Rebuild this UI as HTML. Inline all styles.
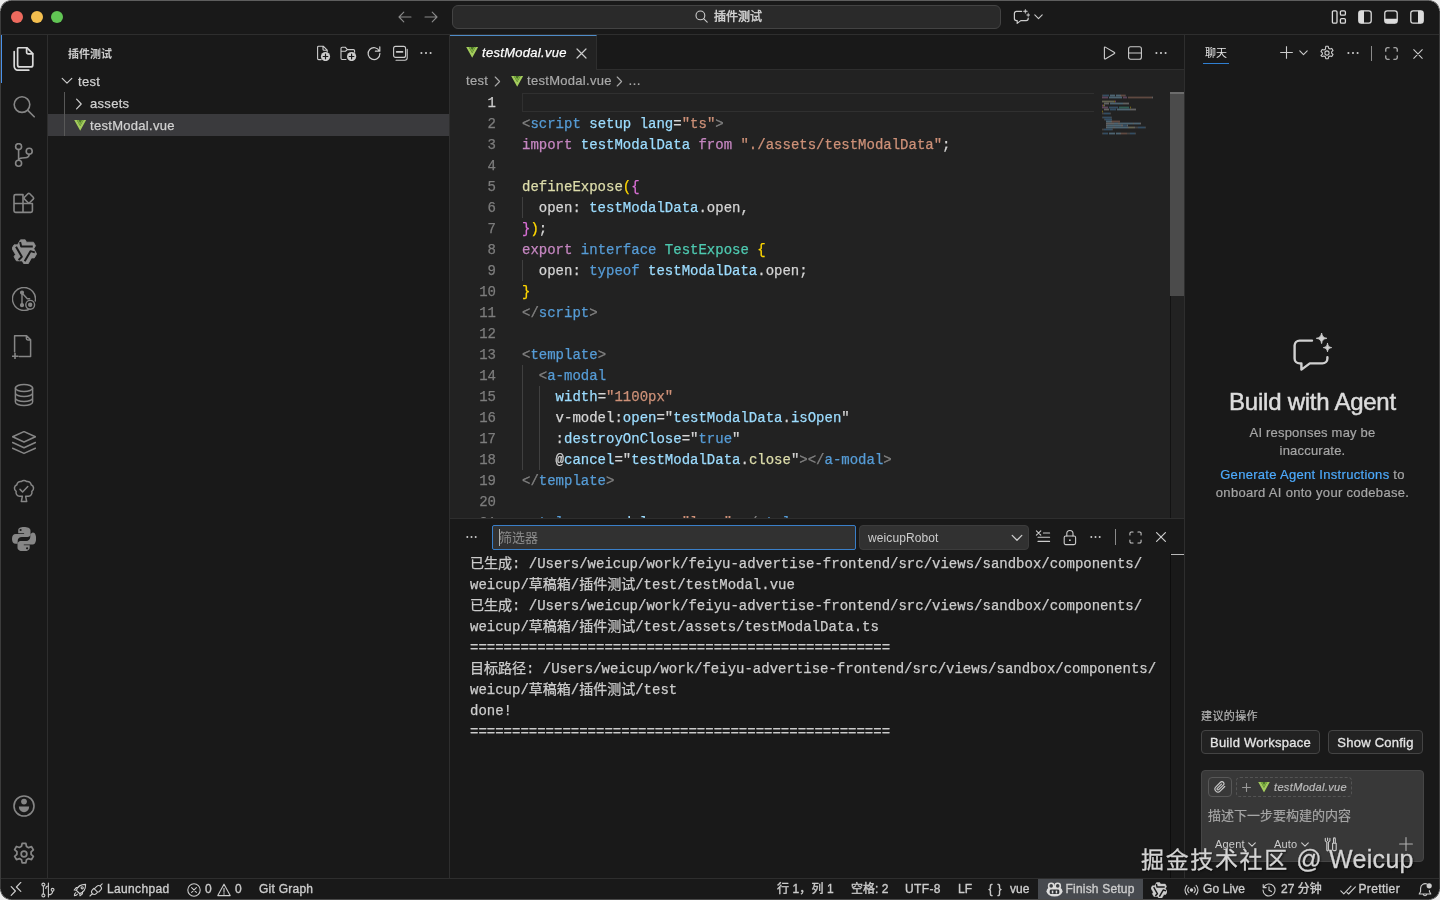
<!DOCTYPE html>
<html lang="zh-CN">
<head>
<meta charset="utf-8">
<title>testModal.vue — 插件测试</title>
<style>
*{box-sizing:border-box;margin:0;padding:0}
html,body{width:1440px;height:900px;overflow:hidden;background:#191919}
body{font-family:"Liberation Sans","Noto Sans CJK SC",sans-serif;font-size:13px;color:#cccccc;position:relative}
.abs{position:absolute}
#title,#act,#side,#ed,#pan,#chat,#stat,#wm{will-change:transform}
svg{display:block}
.ico{stroke:#cccccc;fill:none;stroke-linecap:round;stroke-linejoin:round}
.ico:not([stroke-width]){stroke-width:1.1}
/* window corners */
.corner{position:absolute;width:12px;height:12px;background:#8e8e8e;z-index:50}
.corner i{position:absolute;width:24px;height:24px;border-radius:12px;background:#191919}
.cn{position:absolute;width:11px;height:11px;z-index:60}
/* title bar */
#title{left:0;top:0;width:1440px;height:35px;border-bottom:1px solid #2e2e2e;background:#191919}
.tl{position:absolute;top:11px;width:12px;height:12px;border-radius:6px}
#cmd{left:452px;top:5px;width:549px;height:24px;border:1px solid #434343;border-radius:6px;background:#2a2a2a}
#cmd span{position:absolute;left:261px;top:3px;font-size:12px;color:#d4d4d4;line-height:16px;-webkit-text-stroke:.45px #d4d4d4}
/* activity bar */
#act{left:0;top:35px;width:48px;height:843px;border-right:1px solid #2e2e2e;background:#191919}
#act .sel{position:absolute;left:0;top:0;width:2px;height:48px;background:#4a92ea}
#act svg{position:absolute;left:12px}
/* sidebar */
#side{left:48px;top:35px;width:402px;height:843px;border-right:1px solid #2e2e2e;background:#191919}
#side .hd{position:absolute;left:20px;top:12px;font-size:11px;color:#cccccc;font-weight:bold;line-height:14px}
.row{position:absolute;left:0;width:401px;height:22px;line-height:24px;font-size:13px;color:#d0d0d0;letter-spacing:.3px;-webkit-text-stroke:.25px #d0d0d0}
.row.on{background:#3a3a3d}
/* editor */
#ed{left:450px;top:35px;width:734px;height:483px;background:#222222}
#tabs{left:0;top:0;width:735px;height:35px;background:#191919;border-bottom:1px solid #2e2e2e}
#tab{left:0;top:0;width:147px;height:35px;background:#222222;border-top:1px solid #4f8cc8;border-right:1px solid #2e2e2e}
#tab span{position:absolute;left:32px;top:9px;font-style:italic;font-size:13px;color:#ffffff;line-height:16px;letter-spacing:.3px;-webkit-text-stroke:.25px #ffffff}
#bc{left:0;top:35px;width:735px;height:22px;line-height:22px;font-size:13px;color:#a9a9a9;letter-spacing:.3px;-webkit-text-stroke:.2px #a9a9a9}
#code{left:0;top:57px;width:721px;height:426px;overflow:hidden;font-family:"Liberation Mono",monospace;font-size:14px;line-height:21px;white-space:pre;color:#d4d4d4;-webkit-text-stroke:.25px}
.ln{position:absolute;left:0;margin-top:1px;width:46px;text-align:right;color:#7d7d7d;height:21px}
.cl{position:absolute;left:72px;margin-top:1px;height:21px}
.k{color:#c586c0}.b{color:#569cd6}.v{color:#9cdcfe}.s{color:#ce9178}.g{color:#808080}.t{color:#4ec9b0}.y{color:#ffd700}.p{color:#da70d6}.f{color:#dcdcaa}.w{color:#d4d4d4}
.ig{position:absolute;width:1px;background:#404040}
/* panel */
#pan{left:450px;top:518px;width:734px;height:360px;background:#191919;border-top:1px solid #2e2e2e}
#out{left:20px;top:35px;font-family:"Liberation Mono","Noto Sans CJK SC",monospace;font-size:14px;line-height:21px;color:#cccccc;white-space:pre;-webkit-text-stroke:.25px #cccccc}
/* chat */
#chat{left:1184px;top:35px;width:256px;height:843px;background:#191919;border-left:1px solid #2e2e2e}
.btn{height:24px;padding-top:1px;border:1px solid #444444;border-radius:4px;background:#222222;text-align:center;font-size:13px;line-height:22px;color:#e4e4e4;letter-spacing:.25px;-webkit-text-stroke:.3px #e4e4e4;white-space:nowrap}
#wm{left:1141px;top:841px;white-space:nowrap;line-height:36px;color:#d4d4d4;-webkit-text-stroke:.3px #d4d4d4;text-shadow:1px 1px 2px rgba(0,0,0,.7);z-index:20}
/* status */
#stat{left:0;top:878px;width:1440px;height:22px;border-top:1px solid #2e2e2e;background:#191919;font-size:12px;color:#cccccc;line-height:21px}
#stat span{position:absolute;top:0;white-space:nowrap;-webkit-text-stroke:.35px #cccccc}
</style>
</head>
<body>
<div class="abs" style="left:0;top:0;width:1440px;height:1px;background:#5e5e5e;z-index:55"></div>
<div class="abs" style="left:0;top:899px;width:1440px;height:1px;background:#4a4a4a;z-index:55"></div>
<div class="abs" style="left:0;top:0;width:1px;height:900px;background:#3c3c3c;z-index:55"></div>
<div class="abs" style="left:1439px;top:0;width:1px;height:900px;background:#3c3c3c;z-index:55"></div>
<div class="cn" style="left:0;top:0;background:radial-gradient(circle at 100% 100%,rgba(0,0,0,0) 9.600px,#777 10.200px,#777 10.600px,#ececec 11.200px)"></div>
<div class="cn" style="left:1429px;top:0;background:radial-gradient(circle at 0 100%,rgba(0,0,0,0) 9.600px,#777 10.200px,#777 10.600px,#ececec 11.200px)"></div>
<div class="cn" style="left:0;top:889px;background:radial-gradient(circle at 100% 0,rgba(0,0,0,0) 9.600px,#666 10.200px,#666 10.600px,#ececec 11.200px)"></div>
<div class="cn" style="left:1429px;top:889px;background:radial-gradient(circle at 0 0,rgba(0,0,0,0) 9.600px,#666 10.200px,#666 10.600px,#ececec 11.200px)"></div>
<!-- TITLE -->
<div id="title" class="abs">
  <div class="tl" style="left:11px;background:#ed6a5e"></div>
  <div class="tl" style="left:31px;background:#f4bf4f"></div>
  <div class="tl" style="left:51px;background:#61c554"></div>
  <svg class="abs ico" style="left:398px;top:11px" width="14" height="12" viewBox="0 0 14 12"><path d="M13 6H1.200M5.800 1.200L1 6l4.800 4.800" style="stroke:#8a8a8a"/></svg>
  <svg class="abs ico" style="left:424px;top:11px" width="14" height="12" viewBox="0 0 14 12"><path d="M1 6h11.800M8.200 1.200L13 6l-4.800 4.800" style="stroke:#8a8a8a"/></svg>
  <div id="cmd" class="abs"><svg class="abs ico" style="left:242px;top:4px" width="13" height="13" viewBox="0 0 13 13"><circle cx="5.400" cy="5.400" r="4.400"/><path d="M8.600 8.600l3.600 3.600"/></svg><span>插件测试</span></div>
  <!-- chat icon -->
  <svg class="abs ico" style="left:1013px;top:9px" width="18" height="16" viewBox="0 0 18 16"><path d="M8.600 2.400H3.400a2 2 0 0 0-2 2v5.200a2 2 0 0 0 2 2h.8v2.800l3.600-2.800h5.400a2 2 0 0 0 2-2V9" stroke-width="1.200"/><path d="M12.400 0c.2 1.500.8 2.100 2.300 2.300-1.500.2-2.100.8-2.300 2.300-.2-1.500-.8-2.100-2.300-2.300 1.500-.2 2.100-.8 2.300-2.300zM15.200 4.200c.2 1.200.6 1.600 1.800 1.800-1.200.2-1.600.6-1.800 1.800-.2-1.200-.6-1.600-1.800-1.800 1.200-.2 1.600-.6 1.800-1.800z" fill="#cccccc" stroke-width=".4"/></svg>
  <svg class="abs ico" style="left:1034px;top:14px" width="9" height="6" viewBox="0 0 9 6"><path d="M.8.900l3.700 3.700L8.200.900"/></svg>
  <!-- layout controls -->
  <svg class="abs ico" style="left:1331px;top:10px;stroke:#dcdcdc" width="16" height="14" viewBox="0 0 16 14" stroke-width="1.3"><rect x="1.4" y=".8" width="4.6" height="12.4" rx="1.2"/><rect x="9.400" y=".8" width="5" height="4.4" rx="1.2"/><rect x="9.400" y="8.600" width="5" height="4.600" rx="1.2"/></svg>
  <svg class="abs ico" style="left:1358px;top:10px;stroke:#dcdcdc" width="14" height="14" viewBox="0 0 14 14" stroke-width="1.3"><rect x=".8" y=".8" width="12.4" height="12.4" rx="2.4"/><path d="M3.200 .8h2.800v12.400H3.200a2.400 2.400 0 0 1-2.400-2.400V3.200A2.400 2.400 0 0 1 3.200 .8z" fill="#dcdcdc" stroke="none"/></svg>
  <svg class="abs ico" style="left:1384px;top:10px;stroke:#dcdcdc" width="14" height="14" viewBox="0 0 14 14" stroke-width="1.3"><rect x=".8" y=".8" width="12.4" height="12.4" rx="2.4"/><path d="M.8 8.800h12.400v2a2.400 2.400 0 0 1-2.400 2.400H3.200a2.400 2.400 0 0 1-2.400-2.400z" fill="#dcdcdc" stroke="none"/></svg>
  <svg class="abs ico" style="left:1410px;top:10px;stroke:#dcdcdc" width="14" height="14" viewBox="0 0 14 14" stroke-width="1.3"><rect x=".8" y=".8" width="12.4" height="12.4" rx="2.4"/><path d="M8 .8h2.800a2.400 2.400 0 0 1 2.400 2.400v7.600a2.400 2.400 0 0 1-2.400 2.400H8z" fill="#dcdcdc" stroke="none"/></svg>
</div>
<!-- ACTIVITY -->
<div id="act" class="abs"><div class="sel"></div>
  <!-- files (active) -->
  <svg style="top:12px" width="24" height="24" viewBox="0 0 24 24" class="ico" stroke-width="1.7"><path d="M6.6 0.7h8.2l6 6v11.2a2 2 0 0 1-2 2H7.6a2 2 0 0 1-2-2V1.7a1 1 0 0 1 1-1z" style="stroke:#dadada"/><path d="M14.6 0.9v4.3a1.6 1.6 0 0 0 1.6 1.6h4.4" style="stroke:#dadada"/><path d="M2.2 4.6v14.6a4 4 0 0 0 4 4h10.6" style="stroke:#dadada"/></svg>
  <!-- search -->
  <svg style="top:60px" width="24" height="24" viewBox="0 0 24 24" class="ico" stroke-width="1.6"><circle cx="10" cy="9.6" r="7.8" style="stroke:#868686"/><path d="M15.8 15.4l6.4 6.4" style="stroke:#868686"/></svg>
  <!-- scm -->
  <svg style="top:108px" width="24" height="24" viewBox="0 0 24 24" class="ico" stroke-width="1.6"><g style="stroke:#868686"><circle cx="6.6" cy="3.6" r="3"/><circle cx="6.6" cy="20.2" r="3"/><circle cx="17.2" cy="8.2" r="3"/><path d="M6.600 6.600v10.600M17.200 11.200c0 2.400-1.600 3.400-4 3.600l-3 .200c-2 .200-3.600 .700-3.600 2"/></g></svg>
  <!-- extensions -->
  <svg style="top:156px" width="24" height="24" viewBox="0 0 24 24" class="ico" stroke-width="1.6"><g style="stroke:#868686"><path d="M11 3.600H3.600a1.600 1.600 0 0 0-1.600 1.600V19.800a1.600 1.600 0 0 0 1.600 1.600H18.800a1.600 1.600 0 0 0 1.600-1.600V12.500H2M11 3.600V21.400"/><rect x="13.100" y="3.400" width="7.500" height="7.500" rx="1.300" transform="rotate(45 16.850 7.150)"/></g></svg>
  <!-- lingma -->
  <svg style="top:203.5px;left:11.5px" width="25" height="25" viewBox="-12.5 -12.5 25 25"><path d="M-4.00 -11.70L0.70 -11.70L2.00 -9.30L9.00 -9.30L11.00 -5.70L9.30 -2.70L12.13 2.39L9.78 6.46L7.05 6.38L3.55 12.44L-0.56 12.38L-2.31 9.40L-8.13 9.31L-10.48 5.24L-9.05 2.92L-12.55 -3.14L-10.44 -6.68L-6.99 -6.70z" fill="#8e8e8e" stroke="#8e8e8e" stroke-width=".8" stroke-linejoin="round"/><path d="M-4.40 -9.40L-3.30 -5.00L8.30 -5.00M10.34 0.89L5.98 -0.36L0.18 9.69M-5.94 8.51L-2.68 5.36L-8.48 -4.69" fill="none" stroke="#191919" stroke-width="2" stroke-linejoin="round"/></svg>
  <!-- gitlens inspect -->
  <svg style="top:252px" width="24" height="24" viewBox="0 0 24 24" class="ico" stroke-width="1.4"><g style="stroke:#868686"><path d="M17 22.300A11.500 11.500 0 1 1 23.300 14"/><circle cx="18.200" cy="17.800" r="4.400"/><circle cx="18.200" cy="17.800" r="1.500" fill="#868686"/><path d="M10 6v12M10.500 6.500l4.800 5.200h2.400" stroke-width="1.400"/><circle cx="10" cy="5.600" r="1.400" fill="#868686"/><circle cx="10" cy="18.200" r="1.400" fill="#868686"/></g></svg>
  <!-- new file -->
  <svg style="top:300px" width="24" height="24" viewBox="0 0 24 24" class="ico" stroke-width="1.5"><g style="stroke:#868686"><path d="M2.600 16.800V.800h12l4 4v16.800H7.400M14.400 1v2.600a1.400 1.400 0 0 0 1.400 1.400h2.600"/><path d="M0 21.200h6M3 18.200v6" stroke-width="1.600"/></g></svg>
  <!-- database -->
  <svg style="top:348px" width="24" height="24" viewBox="0 0 24 24" class="ico" stroke-width="1.5"><g style="stroke:#868686"><ellipse cx="12" cy="5" rx="8.600" ry="3.600"/><path d="M3.400 5v14c0 2 3.800 3.600 8.600 3.600s8.600-1.600 8.600-3.600V5M3.400 10c0 2 3.800 3.600 8.600 3.600s8.600-1.600 8.600-3.600M3.400 15c0 2 3.800 3.600 8.600 3.600s8.600-1.600 8.600-3.600"/></g></svg>
  <!-- layers -->
  <svg style="top:396px" width="24" height="24" viewBox="0 0 24 24" class="ico" stroke-width="1.5"><g style="stroke:#868686"><path d="M12 0.600l11.400 5.200L12 11 .6 5.800z"/><path d="M.6 11.500L12 16.700l11.400-5.200M.6 17.200L12 22.400l11.400-5.200"/></g></svg>
  <!-- tree -->
  <svg style="top:444px" width="24" height="24" viewBox="0 0 24 24" class="ico" stroke-width="1.5"><g style="stroke:#868686"><path d="M10.400 17.200H7.600a3.600 3.600 0 0 1-3.400-4.800 3.700 3.700 0 0 1 .6-6.600A3.700 3.700 0 0 1 9.400 2.600a3.600 3.600 0 0 1 5.200 0 3.700 3.700 0 0 1 4.600 3.200 3.700 3.700 0 0 1 .6 6.600 3.600 3.600 0 0 1-3.400 4.800h-2.800l1.100 5.400H9.300z"/><path d="M8 10.400l2.600 2.600 5.200-5.400" stroke-width="1.500"/></g></svg>
  <!-- python -->
  <svg style="top:492px" width="24" height="24" viewBox="0 0 24 24"><g fill="#868686"><path d="M11.800 0C8.600 0 6.200 1 6.200 3.400v2.800h5.900v.9H3.700C1.400 7.100 0 9 0 12c0 3 1.300 4.800 3.600 4.800h2.100v-3c0-2.200 1.800-3.800 4-3.800h5.800c1.700 0 3-1.400 3-3.100V3.400C18.500 1.200 15.400 0 11.800 0zM8.600 1.900a1.100 1.100 0 1 1 0 2.200 1.100 1.100 0 0 1 0-2.200z"/><path d="M18.300 7.100v2.800c0 2.300-1.900 4-4 4H8.500c-1.600 0-3 1.500-3 3.100v3.700c0 1.700 1.500 2.700 3.100 3.200 2 .6 3.800.7 6.100 0 1.500-.5 3-1.400 3-3.200v-2.400h-5.900v-.9h8.900c1.700 0 2.400-1.200 3-3 .6-1.900.6-3.700 0-6-.4-1.700-1.200-3-3-3zM15.100 20.200a1.100 1.100 0 1 1 0 2.200 1.100 1.100 0 0 1 0-2.200z"/></g></svg>
  <!-- account -->
  <svg style="top:759px" width="24" height="24" viewBox="0 0 24 24" class="ico" stroke-width="1.600"><g style="stroke:#868686"><circle cx="12" cy="12" r="10"/><circle cx="12" cy="7.600" r="2.900" fill="#868686" stroke="none"/><path d="M6.800 12.400h10.400a5.200 5.800 0 0 1-10.400 0z" fill="#868686" stroke="none"/></g></svg>
  <!-- settings -->
  <svg style="top:807px" width="24" height="24" viewBox="0 0 24 24" class="ico" stroke-width="1.6"><g style="stroke:#868686" transform="translate(12 12) scale(1.090) translate(-12 -12)"><circle cx="12" cy="12" r="2.600"/><path d="M10.300 2.300h3.400l.6 2.800 1.900 1.100 2.700-.9 1.700 2.900-2.100 1.900v2.200l2.100 1.900-1.700 2.900-2.700-.9-1.900 1.100-.6 2.800h-3.400l-.6-2.800-1.900-1.100-2.700.9-1.700-2.900 2.100-1.900V9.900L3.400 8l1.700-2.900 2.700.9 1.900-1.100z"/></g></svg>
</div>
<!-- SIDEBAR -->
<svg width="0" height="0" style="position:absolute"><defs>
  <symbol id="vue" viewBox="0 0 12 11"><path d="M0 0h2.600L6 5.900 9.400 0H12L6 10.800z" fill="#a3cc5c"/><path d="M2.600 0h2L6 2.500 7.400 0h2L6 5.900z" fill="#7db23f"/><path d="M4.600 0h2.800L6 2.500z" fill="#4e7a25"/></symbol>
</defs></svg>
<div id="side" class="abs">
  <div class="hd">插件测试</div>
  <!-- header actions -->
  <svg class="abs ico" style="left:268px;top:10px" width="16" height="16" viewBox="0 0 16 16"><path d="M5.200 14.600H2.600a1 1 0 0 1-1-1V2.200a1 1 0 0 1 1-1h4.600l4 4v1.600M7 1.400v2.800a1 1 0 0 0 1 1h3"/><circle cx="9.500" cy="11.500" r="4.600" fill="#cccccc" stroke="none"/><path d="M9.500 9.200v4.600M7.200 11.500h4.600" stroke="#191919" stroke-width="1.200"/></svg>
  <svg class="abs ico" style="left:292px;top:10px" width="17" height="16" viewBox="0 0 17 16"><path d="M6 14.500H2.200a1.200 1.200 0 0 1-1.200-1.200V3.400a1.200 1.200 0 0 1 1.200-1.200h3l2.200 2.400h6a1.200 1.200 0 0 1 1.200 1.200v1.400M1 6.200h4.400l2-1.600"/><circle cx="11.600" cy="11.500" r="4.600" fill="#cccccc" stroke="none"/><path d="M11.600 9.200v4.600M9.300 11.500h4.600" stroke="#191919" stroke-width="1.200"/></svg>
  <svg class="abs ico" style="left:318px;top:10px" width="16" height="16" viewBox="0 0 16 16"><path d="M13.400 6.200A5.900 5.900 0 1 0 13.900 8.400M13.800 1.800v4.400H9.400" stroke-width="1.200"/></svg>
  <svg class="abs ico" style="left:344px;top:10px" width="16" height="16" viewBox="0 0 16 16"><rect x="1.600" y="1.400" width="12" height="11" rx="2"/><path d="M4 15.200h8.800a2.400 2.400 0 0 0 2.400-2.400V4.400"/><path d="M4.600 6.900h6" stroke-width="1.600"/></svg>
  <svg class="abs" style="left:372px;top:16px" width="12" height="4" viewBox="0 0 12 4"><circle cx="1.400" cy="2" r="1.050" fill="#cccccc"/><circle cx="6" cy="2" r="1.050" fill="#cccccc"/><circle cx="10.600" cy="2" r="1.050" fill="#cccccc"/></svg>
  <!-- tree -->
  <div class="row" style="top:35px"><svg class="abs ico" style="left:13px;top:7px" width="12" height="8" viewBox="0 0 12 8"><path d="M1.200 1.400L6 6.200l4.800-4.800" stroke-width="1.200"/></svg><span style="position:absolute;left:30px">test</span></div>
  <div class="ig" style="left:16px;top:57px;height:44px;background:#585858"></div>
  <div class="row" style="top:57px"><svg class="abs ico" style="left:27px;top:6px" width="8" height="12" viewBox="0 0 8 12"><path d="M1.600 1.200L6.200 6l-4.600 4.800" stroke-width="1.200"/></svg><span style="position:absolute;left:42px">assets</span></div>
  <div class="row on" style="top:79px"><div class="ig" style="left:16px;top:0;height:22px;background:#585858"></div><svg class="abs" style="left:25.500px;top:6px" width="12.400" height="11" ><use href="#vue"/></svg><span style="position:absolute;left:42px">testModal.vue</span></div>
</div>
<!-- EDITOR -->
<div id="ed" class="abs">
  <div id="tabs" class="abs">
    <div id="tab" class="abs"><svg class="abs" style="left:16px;top:10.500px" width="12.400" height="11"><use href="#vue"/></svg><span>testModal.vue</span><svg class="abs ico" style="left:126px;top:12px" width="11" height="11" viewBox="0 0 11 11"><path d="M1 1l9 9M10 1l-9 9" stroke-width="1.200"/></svg></div>
    <!-- editor actions -->
    <svg class="abs ico" style="left:651px;top:10px" width="16" height="16" viewBox="0 0 16 16"><path d="M3.400 2.600v10.800a.6.600 0 0 0 .9.500l9.200-5.400a.6.600 0 0 0 0-1L4.300 2.100a.6.600 0 0 0-.9.500z"/></svg>
    <svg class="abs ico" style="left:677px;top:10px" width="16" height="16" viewBox="0 0 16 16"><rect x="1.600" y="1.800" width="12.800" height="12.400" rx="2"/><path d="M1.600 8h12.800"/></svg>
    <svg class="abs" style="left:705px;top:16px" width="12" height="4" viewBox="0 0 12 4"><circle cx="1.400" cy="2" r="1.050" fill="#cccccc"/><circle cx="6" cy="2" r="1.050" fill="#cccccc"/><circle cx="10.600" cy="2" r="1.050" fill="#cccccc"/></svg>
  </div>
  <div id="bc" class="abs">
    <span class="abs" style="left:16px">test</span>
    <svg class="abs ico" style="left:44px;top:6px" width="7" height="11" viewBox="0 0 7 11"><path d="M1.200 1l4.400 4.500L1.200 10" style="stroke:#a9a9a9"/></svg>
    <svg class="abs" style="left:60.500px;top:5.500px" width="12.400" height="11"><use href="#vue"/></svg>
    <span class="abs" style="left:77px">testModal.vue</span>
    <svg class="abs ico" style="left:166px;top:6px" width="7" height="11" viewBox="0 0 7 11"><path d="M1.200 1l4.400 4.500L1.200 10" style="stroke:#a9a9a9"/></svg>
    <span class="abs" style="left:178px">…</span>
  </div>
<div id="code" class="abs">
<div class="abs" style="left:72px;top:1px;width:572px;height:19px;border:1px solid #303030;border-right:0"></div>
<div class="ln" style="top:0px;color:#cccccc">1</div><div class="cl" style="top:0px"></div>
<div class="ln" style="top:21px">2</div><div class="cl" style="top:21px"><span class="g">&lt;</span><span class="b">script</span> <span class="v">setup</span> <span class="v">lang</span>=<span class="s">"ts"</span><span class="g">&gt;</span></div>
<div class="ln" style="top:42px">3</div><div class="cl" style="top:42px"><span class="k">import</span> <span class="v">testModalData</span> <span class="k">from</span> <span class="s">"./assets/testModalData"</span>;</div>
<div class="ln" style="top:63px">4</div><div class="cl" style="top:63px"></div>
<div class="ln" style="top:84px">5</div><div class="cl" style="top:84px"><span class="f">defineExpose</span><span class="y">(</span><span class="p">{</span></div>
<div class="ln" style="top:105px">6</div><div class="cl" style="top:105px">  open: <span class="v">testModalData</span>.open,</div>
<div class="ln" style="top:126px">7</div><div class="cl" style="top:126px"><span class="p">}</span><span class="y">)</span>;</div>
<div class="ln" style="top:147px">8</div><div class="cl" style="top:147px"><span class="k">export</span> <span class="b">interface</span> <span class="t">TestExpose</span> <span class="y">{</span></div>
<div class="ln" style="top:168px">9</div><div class="cl" style="top:168px">  open: <span class="b">typeof</span> <span class="v">testModalData</span>.open;</div>
<div class="ln" style="top:189px">10</div><div class="cl" style="top:189px"><span class="y">}</span></div>
<div class="ln" style="top:210px">11</div><div class="cl" style="top:210px"><span class="g">&lt;/</span><span class="b">script</span><span class="g">&gt;</span></div>
<div class="ln" style="top:231px">12</div><div class="cl" style="top:231px"></div>
<div class="ln" style="top:252px">13</div><div class="cl" style="top:252px"><span class="g">&lt;</span><span class="b">template</span><span class="g">&gt;</span></div>
<div class="ln" style="top:273px">14</div><div class="cl" style="top:273px">  <span class="g">&lt;</span><span class="b">a-modal</span></div>
<div class="ln" style="top:294px">15</div><div class="cl" style="top:294px">    <span class="v">width</span>=<span class="s">"1100px"</span></div>
<div class="ln" style="top:315px">16</div><div class="cl" style="top:315px">    v-model:<span class="v">open</span>="<span class="v">testModalData</span>.<span class="v">isOpen</span>"</div>
<div class="ln" style="top:336px">17</div><div class="cl" style="top:336px">    :<span class="v">destroyOnClose</span>="<span class="b">true</span>"</div>
<div class="ln" style="top:357px">18</div><div class="cl" style="top:357px">    @<span class="v">cancel</span>="<span class="v">testModalData</span>.<span class="f">close</span>"<span class="g">&gt;&lt;/</span><span class="b">a-modal</span><span class="g">&gt;</span></div>
<div class="ln" style="top:378px">19</div><div class="cl" style="top:378px"><span class="g">&lt;/</span><span class="b">template</span><span class="g">&gt;</span></div>
<div class="ln" style="top:399px">20</div><div class="cl" style="top:399px"></div>
<div class="ln" style="top:420px">21</div><div class="cl" style="top:420px"><span class="g">&lt;</span><span class="b">style</span> <span class="v">scoped</span> <span class="v">lang</span>=<span class="s">"less"</span><span class="g">&gt;&lt;/</span><span class="b">style</span><span class="g">&gt;</span></div>
<div class="ig" style="left:72px;top:105px;height:21px"></div>
<div class="ig" style="left:72px;top:168px;height:21px"></div>
<div class="ig" style="left:72px;top:273px;height:105px"></div>
<div class="ig" style="left:89px;top:294px;height:84px"></div>
</div>
<svg id="mm" class="abs" style="left:652px;top:57px" width="56" height="60" viewBox="0 0 56 60"><rect x="0" y="2.6" width="1" height="1.8" fill="#808080" opacity=".36"/><rect x="1" y="2.6" width="6" height="1.8" fill="#569cd6" opacity=".36"/><rect x="8" y="2.6" width="5" height="1.8" fill="#9cdcfe" opacity=".36"/><rect x="14" y="2.6" width="4" height="1.8" fill="#9cdcfe" opacity=".36"/><rect x="18" y="2.6" width="1" height="1.8" fill="#d4d4d4" opacity=".36"/><rect x="19" y="2.6" width="4" height="1.8" fill="#ce9178" opacity=".36"/><rect x="23" y="2.6" width="1" height="1.8" fill="#808080" opacity=".36"/><rect x="0" y="4.6" width="6" height="1.8" fill="#c586c0" opacity=".36"/><rect x="7" y="4.6" width="13" height="1.8" fill="#9cdcfe" opacity=".36"/><rect x="21" y="4.6" width="4" height="1.8" fill="#c586c0" opacity=".36"/><rect x="26" y="4.6" width="24" height="1.8" fill="#ce9178" opacity=".36"/><rect x="50" y="4.6" width="1" height="1.8" fill="#d4d4d4" opacity=".36"/><rect x="0" y="8.6" width="12" height="1.8" fill="#dcdcaa" opacity=".36"/><rect x="12" y="8.6" width="1" height="1.8" fill="#ffd700" opacity=".36"/><rect x="13" y="8.6" width="1" height="1.8" fill="#da70d6" opacity=".36"/><rect x="2" y="10.6" width="5" height="1.8" fill="#d4d4d4" opacity=".36"/><rect x="8" y="10.6" width="13" height="1.8" fill="#9cdcfe" opacity=".36"/><rect x="21" y="10.6" width="6" height="1.8" fill="#d4d4d4" opacity=".36"/><rect x="0" y="12.6" width="1" height="1.8" fill="#da70d6" opacity=".36"/><rect x="1" y="12.6" width="1" height="1.8" fill="#ffd700" opacity=".36"/><rect x="2" y="12.6" width="1" height="1.8" fill="#d4d4d4" opacity=".36"/><rect x="0" y="14.6" width="6" height="1.8" fill="#c586c0" opacity=".36"/><rect x="7" y="14.6" width="9" height="1.8" fill="#569cd6" opacity=".36"/><rect x="17" y="14.6" width="10" height="1.8" fill="#4ec9b0" opacity=".36"/><rect x="28" y="14.6" width="1" height="1.8" fill="#ffd700" opacity=".36"/><rect x="2" y="16.6" width="5" height="1.8" fill="#d4d4d4" opacity=".36"/><rect x="8" y="16.6" width="6" height="1.8" fill="#569cd6" opacity=".36"/><rect x="15" y="16.6" width="13" height="1.8" fill="#9cdcfe" opacity=".36"/><rect x="28" y="16.6" width="6" height="1.8" fill="#d4d4d4" opacity=".36"/><rect x="0" y="18.6" width="1" height="1.8" fill="#ffd700" opacity=".36"/><rect x="0" y="20.6" width="2" height="1.8" fill="#808080" opacity=".36"/><rect x="2" y="20.6" width="6" height="1.8" fill="#569cd6" opacity=".36"/><rect x="8" y="20.6" width="1" height="1.8" fill="#808080" opacity=".36"/><rect x="0" y="24.6" width="1" height="1.8" fill="#808080" opacity=".36"/><rect x="1" y="24.6" width="8" height="1.8" fill="#569cd6" opacity=".36"/><rect x="9" y="24.6" width="1" height="1.8" fill="#808080" opacity=".36"/><rect x="2" y="26.6" width="1" height="1.8" fill="#808080" opacity=".36"/><rect x="3" y="26.6" width="7" height="1.8" fill="#569cd6" opacity=".36"/><rect x="4" y="28.6" width="5" height="1.8" fill="#9cdcfe" opacity=".36"/><rect x="9" y="28.6" width="1" height="1.8" fill="#d4d4d4" opacity=".36"/><rect x="10" y="28.6" width="8" height="1.8" fill="#ce9178" opacity=".36"/><rect x="4" y="30.6" width="8" height="1.8" fill="#d4d4d4" opacity=".36"/><rect x="12" y="30.6" width="4" height="1.8" fill="#9cdcfe" opacity=".36"/><rect x="16" y="30.6" width="2" height="1.8" fill="#d4d4d4" opacity=".36"/><rect x="18" y="30.6" width="13" height="1.8" fill="#9cdcfe" opacity=".36"/><rect x="31" y="30.6" width="1" height="1.8" fill="#d4d4d4" opacity=".36"/><rect x="32" y="30.6" width="6" height="1.8" fill="#9cdcfe" opacity=".36"/><rect x="38" y="30.6" width="1" height="1.8" fill="#d4d4d4" opacity=".36"/><rect x="4" y="32.6" width="1" height="1.8" fill="#d4d4d4" opacity=".36"/><rect x="5" y="32.6" width="14" height="1.8" fill="#9cdcfe" opacity=".36"/><rect x="19" y="32.6" width="2" height="1.8" fill="#d4d4d4" opacity=".36"/><rect x="21" y="32.6" width="4" height="1.8" fill="#569cd6" opacity=".36"/><rect x="25" y="32.6" width="1" height="1.8" fill="#d4d4d4" opacity=".36"/><rect x="4" y="34.6" width="1" height="1.8" fill="#d4d4d4" opacity=".36"/><rect x="5" y="34.6" width="6" height="1.8" fill="#9cdcfe" opacity=".36"/><rect x="11" y="34.6" width="2" height="1.8" fill="#d4d4d4" opacity=".36"/><rect x="13" y="34.6" width="13" height="1.8" fill="#9cdcfe" opacity=".36"/><rect x="26" y="34.6" width="1" height="1.8" fill="#d4d4d4" opacity=".36"/><rect x="27" y="34.6" width="5" height="1.8" fill="#dcdcaa" opacity=".36"/><rect x="32" y="34.6" width="1" height="1.8" fill="#d4d4d4" opacity=".36"/><rect x="33" y="34.6" width="3" height="1.8" fill="#808080" opacity=".36"/><rect x="36" y="34.6" width="7" height="1.8" fill="#569cd6" opacity=".36"/><rect x="43" y="34.6" width="1" height="1.8" fill="#808080" opacity=".36"/><rect x="0" y="36.6" width="2" height="1.8" fill="#808080" opacity=".36"/><rect x="2" y="36.6" width="8" height="1.8" fill="#569cd6" opacity=".36"/><rect x="10" y="36.6" width="1" height="1.8" fill="#808080" opacity=".36"/><rect x="0" y="40.6" width="1" height="1.8" fill="#808080" opacity=".36"/><rect x="1" y="40.6" width="5" height="1.8" fill="#569cd6" opacity=".36"/><rect x="7" y="40.6" width="6" height="1.8" fill="#9cdcfe" opacity=".36"/><rect x="14" y="40.6" width="4" height="1.8" fill="#9cdcfe" opacity=".36"/><rect x="18" y="40.6" width="1" height="1.8" fill="#d4d4d4" opacity=".36"/><rect x="19" y="40.6" width="6" height="1.8" fill="#ce9178" opacity=".36"/><rect x="25" y="40.6" width="3" height="1.8" fill="#808080" opacity=".36"/><rect x="28" y="40.6" width="5" height="1.8" fill="#569cd6" opacity=".36"/><rect x="33" y="40.6" width="1" height="1.8" fill="#808080" opacity=".36"/></svg>
<div class="abs" style="left:720px;top:57px;width:1px;height:426px;background:#131313"></div><div class="abs" style="left:720px;top:57px;width:14px;height:204px;background:#4b4b4b"></div><div class="abs" style="left:720px;top:57px;width:14px;height:2px;background:#6c6c6c"></div>
</div>
<!-- PANEL -->
<div id="pan" class="abs">
  <svg class="abs" style="left:16px;top:16px" width="11" height="4" viewBox="0 0 11 4"><circle cx="1.300" cy="2" r="1" fill="#cccccc"/><circle cx="5.500" cy="2" r="1" fill="#cccccc"/><circle cx="9.700" cy="2" r="1" fill="#cccccc"/></svg>
  <div class="abs" style="left:42px;top:6px;width:364px;height:25px;background:#313131;border:1px solid #3a7fc8;border-radius:2px"><span class="abs" style="left:6px;top:4px;font-size:13px;line-height:16px;color:#8c8c8c">筛选器</span><div class="abs" style="left:6px;top:3px;width:1px;height:17px;background:#aeafad"></div></div>
  <div class="abs" style="left:409px;top:6px;width:170px;height:25px;background:#313131;border:1px solid #3c3c3c;border-radius:4px"><span class="abs" style="left:8px;top:4px;font-size:12px;line-height:16px;color:#cccccc;letter-spacing:.1px">weicupRobot</span><svg class="abs ico" style="left:151px;top:8px" width="12" height="8" viewBox="0 0 12 8"><path d="M1.200 1.400L6 6.200l4.800-4.800" stroke-width="1.300"/></svg></div>
  <!-- clear all -->
  <svg class="abs ico" style="left:585px;top:10px" width="16" height="16" viewBox="0 0 16 16"><path d="M1.400 1.800l4.400 4.400M5.800 1.800L1.400 6.200M8.400 4h6.200M3 8.200h11.600M3 12.400h11.600" stroke-width="1.100"/></svg>
  <!-- lock -->
  <svg class="abs ico" style="left:612px;top:10px" width="16" height="17" viewBox="0 0 16 17"><rect x="2.200" y="7" width="11.400" height="8.600" rx="1.600"/><path d="M4.800 7V4.600a3.100 3.100 0 0 1 6.200 0V7"/><circle cx="7.900" cy="11.200" r=".9" fill="#cccccc" stroke="none"/></svg>
  <svg class="abs" style="left:640px;top:16px" width="11" height="4" viewBox="0 0 11 4"><circle cx="1.300" cy="2" r="1" fill="#cccccc"/><circle cx="5.500" cy="2" r="1" fill="#cccccc"/><circle cx="9.700" cy="2" r="1" fill="#cccccc"/></svg>
  <div class="abs" style="left:665px;top:10px;width:1px;height:16px;background:#8a8a8a"></div>
  <!-- maximize -->
  <svg class="abs ico" style="left:678.500px;top:11.500px" width="13" height="13" viewBox="0 0 14 14"><path d="M1 4.400V2.400A1.400 1.400 0 0 1 2.400 1h2M9.600 1h2A1.400 1.400 0 0 1 13 2.400v2M13 9.600v2a1.400 1.400 0 0 1-1.400 1.400h-2M4.400 13h-2A1.400 1.400 0 0 1 1 11.600v-2"/></svg>
  <svg class="abs ico" style="left:706px;top:13px" width="10" height="10" viewBox="0 0 10 10"><path d="M.6.600l8.800 8.800M9.400.600L.6 9.400" stroke-width="1.200"/></svg>
  <div id="out" class="abs">已生成: /Users/weicup/work/feiyu-advertise-frontend/src/views/sandbox/components/
weicup/草稿箱/插件测试/test/testModal.vue
已生成: /Users/weicup/work/feiyu-advertise-frontend/src/views/sandbox/components/
weicup/草稿箱/插件测试/test/assets/testModalData.ts
==================================================
目标路径: /Users/weicup/work/feiyu-advertise-frontend/src/views/sandbox/components/
weicup/草稿箱/插件测试/test
done!
==================================================</div>
  <div class="abs" style="left:721px;top:34.500px;width:13px;height:1.500px;background:#b8b8b8"></div><div class="abs" style="left:720px;top:34px;width:1px;height:326px;background:#0d0d0d"></div>
</div>
<!-- CHAT -->
<div id="chat" class="abs">
  <span class="abs" style="left:20px;top:10px;font-size:11px;line-height:16px;color:#e7e7e7">聊天</span>
  <div class="abs" style="left:18px;top:28px;width:26px;height:1px;background:#2f7fd2"></div>
  <svg class="abs ico" style="left:94px;top:10px" width="15" height="15" viewBox="0 0 15 15"><path d="M7.500 1.200v12.600M1.200 7.500h12.600" stroke-width="1.100" stroke-linecap="butt"/></svg>
  <svg class="abs ico" style="left:114px;top:15px" width="9" height="6" viewBox="0 0 9 6"><path d="M.8.900l3.700 3.700L8.200.900"/></svg>
  <svg class="abs ico" style="left:134px;top:10px" width="16" height="16" viewBox="0 0 16 16"><circle cx="8" cy="8" r="2.100"/><path d="M6.800 1.300h2.400l.4 1.900 1.400.8 1.800-.6 1.200 2.100-1.400 1.300v1.400l1.400 1.300-1.200 2.100-1.800-.6-1.400.8-.4 1.900H6.800l-.4-1.900-1.400-.8-1.800.6L2 10.500l1.400-1.300V7.800L2 6.500l1.200-2.100 1.800.6 1.400-.8z"/></svg>
  <svg class="abs" style="left:162px;top:16px" width="12" height="4" viewBox="0 0 12 4"><circle cx="1.400" cy="2" r="1.050" fill="#cccccc"/><circle cx="6" cy="2" r="1.050" fill="#cccccc"/><circle cx="10.600" cy="2" r="1.050" fill="#cccccc"/></svg>
  <div class="abs" style="left:186px;top:11px;width:1px;height:15px;background:#8a8a8a"></div>
  <svg class="abs ico" style="left:200px;top:12px" width="13" height="13" viewBox="0 0 13 13"><path d="M.8 4.200V2.200A1.400 1.400 0 0 1 2.200.800h2M8.800.800h2a1.400 1.400 0 0 1 1.400 1.400v2M12.200 8.800v2a1.400 1.400 0 0 1-1.400 1.400h-2M4.200 12.200h-2A1.400 1.400 0 0 1 .8 10.800v-2"/></svg>
  <svg class="abs ico" style="left:227.500px;top:13.500px" width="10" height="10" viewBox="0 0 11 11"><path d="M.8.800l9.400 9.400M10.200.800L.8 10.200" stroke-width="1.200"/></svg>
  <!-- welcome -->
  <svg class="abs ico" style="left:106px;top:298px" width="42" height="40" viewBox="0 0 42 40"><g style="stroke:#d0d0d0" stroke-width="2.400"><path d="M21 7.600H8.600a5 5 0 0 0-5 5v12.800a5 5 0 0 0 5 5h1.800v6.200l8.400-6.200h12.600a5 5 0 0 0 5-5v-1.200"/></g><path d="M30.600 0c.5 3.400 1.900 4.800 5.300 5.300-3.400.5-4.800 1.900-5.300 5.300-.5-3.400-1.900-4.800-5.300-5.300 3.400-.5 4.800-1.900 5.300-5.300z" fill="#d0d0d0" stroke="#d0d0d0" stroke-width=".8"/><path d="M36.500 10.400c.4 2.700 1.500 3.800 4.200 4.200-2.700.4-3.800 1.500-4.200 4.200-.4-2.700-1.500-3.800-4.200-4.200 2.700-.4 3.800-1.500 4.200-4.200z" fill="#d0d0d0" stroke="#d0d0d0" stroke-width=".8"/></svg>
  <div class="abs" style="left:0;top:352px;width:255px;text-align:center;font-size:24px;line-height:30px;color:#dcdcdc;letter-spacing:-.25px;-webkit-text-stroke:.5px #dcdcdc">Build with Agent</div>
  <div class="abs" style="left:0;top:389px;width:255px;text-align:center;font-size:13px;line-height:17.500px;color:#a6a6a6;letter-spacing:.2px;-webkit-text-stroke:.2px #a6a6a6">AI responses may be<br>inaccurate.</div>
  <div class="abs" style="left:0;top:431px;width:255px;text-align:center;font-size:13px;line-height:18px;color:#a6a6a6;letter-spacing:.3px;-webkit-text-stroke:.2px #a6a6a6"><span style="color:#4daafc;-webkit-text-stroke:.2px #4daafc">Generate Agent Instructions</span> to<br>onboard AI onto your codebase.</div>
  <!-- suggested -->
  <span class="abs" style="left:16px;top:673px;font-size:11px;line-height:16px;color:#b4b4b4;letter-spacing:.4px;-webkit-text-stroke:.2px #b4b4b4">建议的操作</span>
  <div class="abs btn" style="left:16px;top:695px;width:119px">Build Workspace</div>
  <div class="abs btn" style="left:143px;top:695px;width:95px">Show Config</div>
  <!-- input -->
  <div class="abs" style="left:16px;top:735px;width:223px;height:92px;background:#383838;border:1px solid #464646;border-radius:4px">
    <div class="abs" style="left:6px;top:6px;width:24px;height:20px;border:1px solid #585858;border-radius:4px"><svg class="abs ico" style="left:5px;top:3px" width="12" height="12" viewBox="0 0 24 24" stroke-width="2.300"><path d="M21.440 11.050l-9.190 9.190a6 6 0 0 1-8.490-8.490l9.190-9.190a4 4 0 0 1 5.660 5.660l-9.200 9.190a2 2 0 0 1-2.830-2.830l8.490-8.480" style="stroke:#c8c8c8"/></svg></div>
    <div class="abs" style="left:34px;top:6px;width:116px;height:20px;border:1px dashed #545454;border-radius:4px">
      <svg class="abs ico" style="left:5px;top:5px" width="9" height="9" viewBox="0 0 9 9"><path d="M4.500.500v8M.500 4.500h8" style="stroke:#9a9a9a"/></svg>
      <svg class="abs" style="left:21px;top:4px" width="12" height="10.600"><use href="#vue"/></svg>
      <span class="abs" style="left:37px;top:2px;font-size:11px;line-height:15px;font-style:italic;color:#bcbcbc;letter-spacing:.35px;-webkit-text-stroke:.2px #bcbcbc">testModal.vue</span>
    </div>
    <span class="abs" style="left:6px;top:35px;font-size:13px;line-height:19px;color:#a6a6a6;-webkit-text-stroke:.2px #a6a6a6">描述下一步要构建的内容</span>
    <span class="abs" style="left:13px;top:66px;font-size:11px;line-height:15px;color:#cccccc;letter-spacing:.2px">Agent</span>
    <svg class="abs ico" style="left:46px;top:71px" width="8" height="6" viewBox="0 0 8 6"><path d="M.700.900l3.300 3.300L7.300.900"/></svg>
    <span class="abs" style="left:72px;top:66px;font-size:11px;line-height:15px;color:#cccccc;letter-spacing:.2px">Auto</span>
    <svg class="abs ico" style="left:99px;top:71px" width="8" height="6" viewBox="0 0 8 6"><path d="M.700.900l3.300 3.300L7.300.900"/></svg>
    <svg class="abs ico" style="left:121px;top:66px" width="15" height="15" viewBox="0 0 15 15"><path d="M2.300 1.200v2.600l1.500 1.300v8a.8.800 0 0 0 1.600 0v-8l1.500-1.300V1.200M4.600 1v2.400"/><path d="M9.600 6.200h3.600v6.400a1 1 0 0 1-1 1h-1.600a1 1 0 0 1-1-1zM10.500 6V1.800a.9.900 0 0 1 1.800 0V6"/></svg>
    <svg class="abs ico" style="left:197px;top:66px" width="14" height="14" viewBox="0 0 14 14"><path d="M7 .600v12.800M.600 7h12.800" style="stroke:#b0b0b0"/></svg>
  </div>
</div>
<div id="wm" class="abs"><span style="font-size:23px;letter-spacing:1.650px">掘金技术社区</span><span style="font-size:25px;letter-spacing:.3px"> @ Weicup</span></div>
<!-- STATUS -->
<div id="stat" class="abs">
  <!-- remote -->
  <svg class="abs ico" style="left:9px;top:3px" width="14" height="14" viewBox="0 0 14 14" stroke-width="1.200"><path d="M2.200 4.600L6.400 9l-4.200 4.400M11.800.400L7.400 5l4.400 4.400"/></svg>
  <!-- gitlens graph -->
  <svg class="abs ico" style="left:40px;top:3px" width="15" height="16" viewBox="0 0 15 16"><circle cx="3.400" cy="2.600" r="1.500"/><circle cx="3.400" cy="13.400" r="1.500"/><path d="M3.400 4.100v7.800M8.400 1v14M8.400 12.800c3.400 0 4.200-1.600 4.200-3.600M8.400 4c-2 0-2.600 1.200-2.600 2.400" /><circle cx="12.600" cy="7.800" r="1.400"/></svg>
  <!-- rocket -->
  <svg class="abs ico" style="left:73px;top:4px" width="14" height="14" viewBox="0 0 14 14"><path d="M5 9l-1.600-1.600C4.400 4 7.400 1.400 12.600 1.400 12.600 6.600 10 9.600 6.600 10.600zM3.600 7.200L1.200 7l2-2.400 2.200-.2M6.800 10.400l.2 2.400 2.400-2 .2-2.200M2.800 9.600c-1 .6-1.400 2.200-1.400 3 .8 0 2.400-.4 3-1.400"/><circle cx="9.200" cy="4.800" r="1.100"/></svg>
  <!-- plug -->
  <svg class="abs ico" style="left:89px;top:4px" width="14" height="14" viewBox="0 0 14 14"><path d="M1 13l2.600-2.600M3 8.200l2.800 2.800 1.800-1.800a2.800 2.800 0 0 0 0-4l-.6-.6a2.800 2.800 0 0 0-4 0zM4.800 6.400l1.600-1.600M6.600 8.200l1.600-1.600" style="display:none"/><path d="M1 13l2.400-2.400M3.400 10.600a2.700 2.700 0 0 1 0-3.800l1.400-1.400 3.800 3.800-1.400 1.400a2.700 2.700 0 0 1-3.800 0zM6 5.200l1.800-1.800a2.700 2.700 0 0 1 3.800 0 2.700 2.700 0 0 1 0 3.800L9.800 9M11.400 2.600L13.200.800" /></svg>
  <span style="left:107px;letter-spacing:.35px">Launchpad</span>
  <!-- error -->
  <svg class="abs ico" style="left:187px;top:4px" width="14" height="14" viewBox="0 0 14 14"><circle cx="7" cy="7" r="6.200"/><path d="M4.600 4.600l4.800 4.800M9.400 4.600L4.600 9.400"/></svg>
  <span style="left:205px">0</span>
  <svg class="abs ico" style="left:216.5px;top:4px" width="14" height="14" viewBox="0 0 14 14"><path d="M7 1.200l6.200 11.400H.8zM7 5.200v4M7 10.600v.6"/></svg>
  <span style="left:235px">0</span>
  <span style="left:259px;letter-spacing:.25px">Git Graph</span>
  <!-- right -->
  <span style="left:777px;letter-spacing:.1px">行 1，列 1</span>
  <span style="left:851px">空格: 2</span>
  <span style="left:905px;letter-spacing:.35px">UTF-8</span>
  <span style="left:958px">LF</span>
  <span style="left:988.5px;letter-spacing:.8px">{ }</span>
  <span style="left:1010px">vue</span>
  <div class="abs" style="left:1038px;top:0;width:105px;height:21px;background:#474a4f"></div>
  <!-- copilot -->
  <svg class="abs" style="left:1045.500px;top:2.500px" width="17" height="15" viewBox="0 0 17 15"><ellipse cx="8.500" cy="9.300" rx="8" ry="5.300" fill="#dcdcdc"/><circle cx="5.200" cy="3.900" r="3.400" fill="#dcdcdc"/><circle cx="11.700" cy="3.900" r="3.400" fill="#dcdcdc"/><circle cx="5.200" cy="3.900" r="1.800" fill="#3c3f43"/><circle cx="11.700" cy="3.900" r="1.800" fill="#3c3f43"/><rect x="3.700" y="7.500" width="9.600" height="4.600" rx="1.400" fill="#2f3134"/><rect x="5.800" y="8.600" width="1.500" height="2.800" fill="#dcdcdc"/><rect x="9.700" y="8.600" width="1.500" height="2.800" fill="#dcdcdc"/></svg>
  <span style="left:1065.500px;letter-spacing:.2px">Finish Setup</span>
  <!-- lingma small -->
  <svg class="abs" style="left:1150.5px;top:2.500px" width="16.500" height="16.500" viewBox="-12.5 -12.5 25 25"><path d="M-4.00 -11.70L0.70 -11.70L2.00 -9.30L9.00 -9.30L11.00 -5.70L9.30 -2.70L12.13 2.39L9.78 6.46L7.05 6.38L3.55 12.44L-0.56 12.38L-2.31 9.40L-8.13 9.31L-10.48 5.24L-9.05 2.92L-12.55 -3.14L-10.44 -6.68L-6.99 -6.70z" fill="#cccccc" stroke="#cccccc" stroke-width=".8" stroke-linejoin="round"/><path d="M-4.40 -9.40L-3.30 -5.00L8.30 -5.00M10.34 0.89L5.98 -0.36L0.18 9.69M-5.94 8.51L-2.68 5.36L-8.48 -4.69" fill="none" stroke="#191919" stroke-width="2.2" stroke-linejoin="round"/></svg>
  <!-- broadcast -->
  <svg class="abs ico" style="left:1184px;top:4px" width="15" height="14" viewBox="0 0 15 14"><circle cx="7.500" cy="7" r="1.200" fill="#cccccc"/><path d="M4.900 4.400a3.700 3.700 0 0 0 0 5.200M10.100 4.400a3.700 3.700 0 0 1 0 5.200M2.900 2.400a6.500 6.500 0 0 0 0 9.200M12.100 2.400a6.500 6.500 0 0 1 0 9.200"/></svg>
  <span style="left:1203px;letter-spacing:.1px">Go Live</span>
  <!-- history -->
  <svg class="abs ico" style="left:1262px;top:4px" width="14" height="14" viewBox="0 0 14 14"><path d="M1.600 4.400A6 6 0 1 1 1 7M1.200 1.600v3h3M7 3.800V7.200l2.400 1.400"/></svg>
  <span style="left:1281px">27 分钟</span>
  <!-- check-all -->
  <svg class="abs ico" style="left:1340px;top:5px" width="16" height="12" viewBox="0 0 16 12"><path d="M.8 6.800l3 3L11 2.200M7 8.400l1.600 1.600L15.400 2.800"/></svg>
  <span style="left:1358.500px;letter-spacing:.35px">Prettier</span>
  <!-- bell -->
  <svg class="abs ico" style="left:1418px;top:3px" width="15" height="16" viewBox="0 0 15 16"><path d="M9 2A4.600 4.600 0 0 0 2.600 6.200v3.200L1.200 12h11.600l-1.400-2.600V8.600M5.200 12.400a1.900 1.900 0 0 0 3.600 0"/><circle cx="11.200" cy="3.800" r="2.600" fill="#cccccc" stroke="none"/></svg>
</div>
</body>
</html>
